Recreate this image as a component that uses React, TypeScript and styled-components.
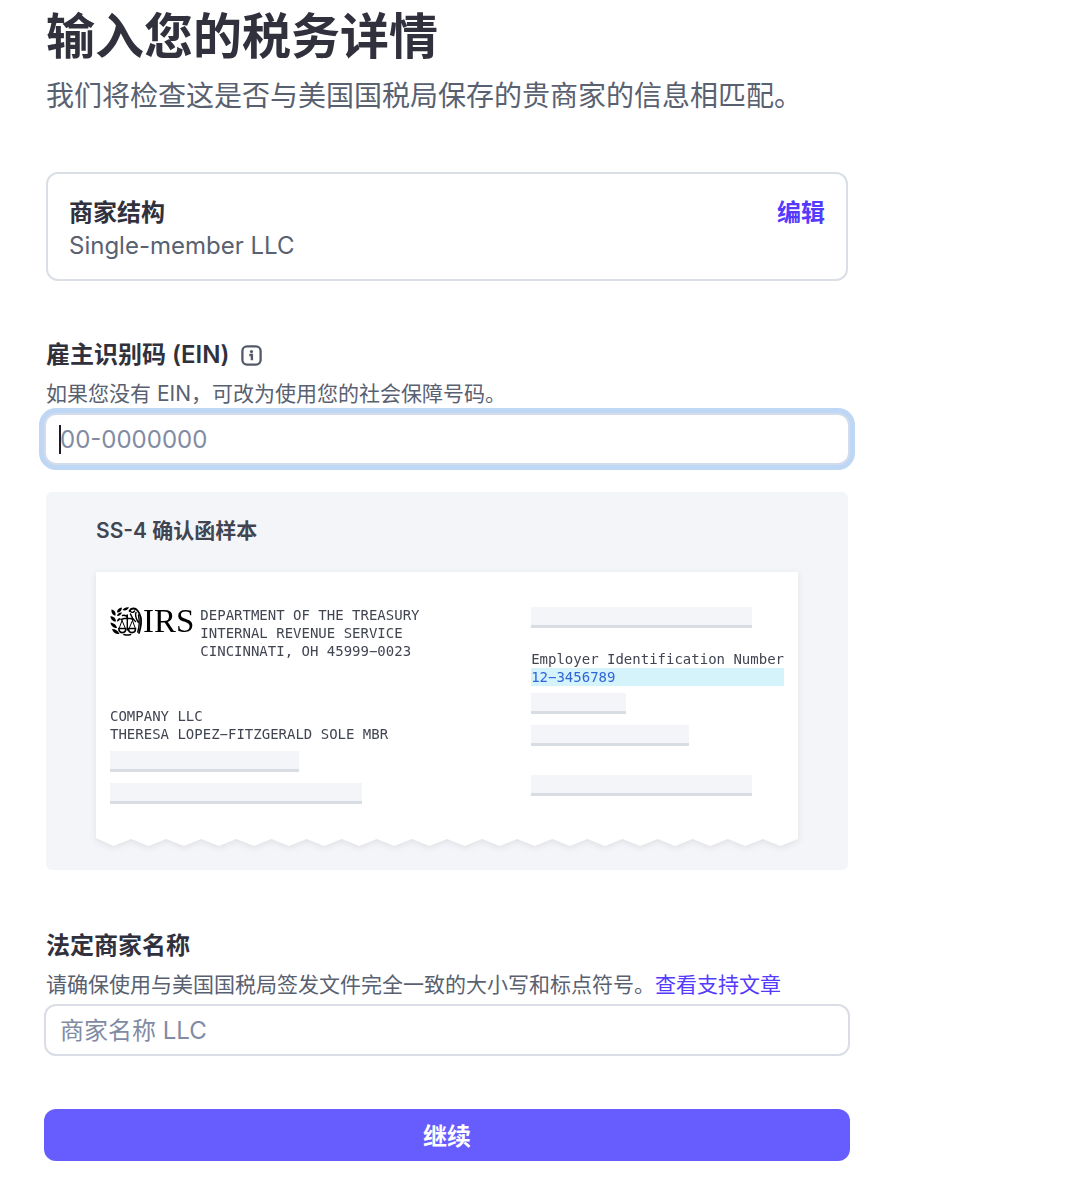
import React from "react";
import styled, { createGlobalStyle } from "styled-components";

const sans = `Inter, "Noto Sans CJK SC", sans-serif`;
const mono = `"DejaVu Sans Mono", monospace`;

const GlobalStyle = createGlobalStyle`
  *, *::before, *::after { box-sizing: border-box; }
  body { margin: 0; background: #ffffff; color: #30313d; font-family: ${sans}; }
  h1, h2, p { margin: 0; }
`;

const Page = styled.main`
  max-width: 894px;
  padding: 5px 44px 38px;
`;

const Form = styled.form`
  display: flex;
  flex-direction: column;
`;

const Header = styled.header`
  display: flex;
  flex-direction: column;
  gap: 7px;
  padding: 0 2px;
`;

const Title = styled.h1`
  font-size: 49px;
  line-height: 64px;
  font-weight: 700;
`;

const Subtitle = styled.p`
  font-size: 28px;
  line-height: 40px;
  color: #596171;
`;

const Card = styled.section`
  display: flex;
  justify-content: space-between;
  align-items: flex-start;
  margin: 56px 2px 0;
  padding: 22px 21px 17px;
  border: 2px solid #dadfe5;
  border-radius: 12px;
  font-size: 24px;
  line-height: 33px;
`;

const CardTitle = styled.h2`
  font-size: 24px;
  line-height: 33px;
  font-weight: 600;
`;

const CardText = styled.p`
  color: #596171;
`;

const EditLink = styled.a`
  color: #533afd;
  font-weight: 600;
  text-decoration: none;
`;

const Field = styled.div<{ $top: number }>`
  display: flex;
  flex-direction: column;
  margin-top: ${(p) => p.$top}px;
`;

const LabelRow = styled.div`
  display: flex;
  align-items: center;
  gap: 12px;
  padding: 0 2px;
`;

const Label = styled.label`
  font-size: 24px;
  line-height: 32px;
  font-weight: 600;
`;

const InfoButton = styled.button`
  display: flex;
  padding: 0;
  border: 0;
  background: none;
  color: #545969;
`;

const Hint = styled.p`
  margin: 9px 2px 5px;
  font-size: 21px;
  line-height: 28px;
  color: #596171;
`;

const HintLink = styled.a`
  color: #533afd;
  text-decoration: none;
`;

const InputWrap = styled.div`
  position: relative;
  display: flex;
`;

const TextInput = styled.input<{ $focused?: boolean }>`
  width: 100%;
  height: 52px;
  padding: 0 14px;
  border: 2px solid ${(p) => (p.$focused ? "#d3dcec" : "#dadde6")};
  border-radius: 12px;
  outline: none;
  background: #ffffff;
  box-shadow: ${(p) => (p.$focused ? "0 0 0 5px #bed7f5" : "none")};
  color: #30313d;
  caret-color: transparent;
  font-family: ${sans};
  font-size: 24px;

  &::placeholder {
    color: #818ba3;
    opacity: 1;
  }
`;

const Caret = styled.span`
  position: absolute;
  top: 12px;
  left: 15px;
  width: 2px;
  height: 29px;
  background: #1a1b25;
`;

const Sample = styled.section`
  margin: 27px 2px 0;
  padding: 22px 50px 24px;
  border-radius: 6px;
  background: #f4f5f8;
`;

const SampleTitle = styled.h2`
  margin-bottom: 24px;
  font-size: 21px;
  line-height: 34px;
  font-weight: 600;
  color: #414552;
`;

const Paper = styled.div`
  filter: drop-shadow(0 2px 3px rgba(48, 49, 61, 0.1));
`;

const Sheet = styled.div`
  display: flex;
  justify-content: space-between;
  padding: 34px 14px;
  background: #ffffff;
  color: #414552;
  font-family: ${mono};
  font-size: 14px;
  line-height: 18px;
`;

const TornEdge = styled.svg`
  display: block;
  width: 100%;
  height: 8px;
`;

const Column = styled.div<{ $top?: number }>`
  display: flex;
  flex-direction: column;
  padding-top: ${(p) => p.$top ?? 0}px;
`;

const Sender = styled.div`
  display: flex;
  gap: 6px;
`;

const Logo = styled.div`
  display: flex;
  height: 30px;
  color: #000000;
  font-family: "Liberation Serif", serif;
  font-size: 33px;
  line-height: 30px;
`;

const Recipient = styled.div`
  margin-top: 47px;
`;

const Bar = styled.div<{ $width: number; $top: number }>`
  width: ${(p) => p.$width}px;
  height: 21px;
  margin-top: ${(p) => p.$top}px;
  border-bottom: 3px solid #d8dce3;
  background: #f4f5f8;
`;

const NumberBlock = styled.div`
  margin-top: 22px;
`;

const Highlight = styled.div`
  background: #d5f3fb;
  color: #2f65d9;
`;

const Submit = styled.button`
  height: 52px;
  margin-top: 53px;
  padding: 0 0 2px;
  border: 0;
  border-radius: 12px;
  background: #675dff;
  color: #ffffff;
  font-family: ${sans};
  font-size: 24px;
  font-weight: 600;
`;

const TEETH = 20;
const tornPoints =
  "0,0 " +
  Array.from({ length: TEETH }, (_, i) => `${i * 35 + 17.5},8 ${(i + 1) * 35},1`).join(" ") +
  " 700,0";

function InfoIcon() {
  return (
    <svg width="21" height="21" viewBox="0 0 21 21" fill="none" aria-hidden="true">
      <rect x="1.4" y="1.4" width="18.2" height="18.2" rx="4.6" stroke="currentColor" strokeWidth="2.3" />
      <circle cx="10.5" cy="6.6" r="1.6" fill="currentColor" />
      <path d="M8.300 10h2.600v5.300" stroke="currentColor" strokeWidth="2.4" />
    </svg>
  );
}

function Eagle() {
  return (
    <svg width="33" height="30" viewBox="0 0 33 30" fill="none" stroke="#000" strokeLinecap="round" aria-hidden="true">
      <g fill="#000" stroke="none">
        <path d="M1.500 3.500c3 .5 4.500 3 4 6C3 9.500 1 7 1.500 3.500Z" />
        <path d="M.5 10c3.500.5 5.500 2.500 5.500 5.500C3 15.500.5 13.500.5 10Z" />
        <path d="M.5 16.500c3.500.5 6 2.500 6.500 5.500C3.500 22 .8 20 .5 16.500Z" />
        <path d="M2 23c3.500.2 6 1.500 7.500 5C6 28.500 3 26.800 2 23Z" />
        <path d="M12 1.500c-.2 3-2 5-5 5C7 3.800 9 1.800 12 1.500Z" />
        <path d="M19 1.500c-1.500 2.500-3.800 3.500-6.500 2.500C14 2 16.500 1 19 1.500Z" />
        <path d="M12 6.500c-1 2.500-2.800 3.800-5 3.500.3-2.200 2.200-3.800 5-3.500Z" />
        <path d="M10.500 12c-.5 2.200-1.800 3.500-3.500 3.500 0-2 1.300-3.500 3.500-3.500Z" />
      </g>
      <path strokeWidth="1.800" d="M19.500 5c1.500-3 5.500-3.500 8-.5 3 4 4 9 3.500 13.500-.3 3.500-1 6-2 9" />
      <path strokeWidth="1.400" d="M20.500 5.500c1.500 1.500 3 1 4-.5M20.500 8c1 3 2.500 5.500 5 7.500M26 6.500c-1.500 3.500.5 6.500 2 9.500M28.500 9c1.200 6 .8 12-.8 17" />
      <path strokeWidth="1.400" d="M12.500 9.500c2.500-.8 4.200.5 5 2.500M11 13.500c4-1.500 9-1.500 12.500 0M17.300 9v15" />
      <path strokeWidth="1" d="M12 14.500l-2.500 7M12 14.500l3 7M22.500 14.500l-3 7M22.500 14.500l2.500 7" />
      <path strokeWidth="1.600" d="M8.800 22.500h7c0 5.500-7 5.500-7 0ZM18.500 22.500h7c0 5.500-7 5.500-7 0ZM14 28.500c2 .7 4.500.7 6.500 0" />
    </svg>
  );
}

export default function App() {
  return (
    <>
      <GlobalStyle />
      <Page>
        <Form onSubmit={(e: React.FormEvent) => e.preventDefault()}>
          <Header>
            <Title>输入您的税务详情</Title>
            <Subtitle>我们将检查这是否与美国国税局保存的贵商家的信息相匹配。</Subtitle>
          </Header>

          <Card>
            <div>
              <CardTitle>商家结构</CardTitle>
              <CardText>Single-member LLC</CardText>
            </div>
            <EditLink href="#structure">编辑</EditLink>
          </Card>

          <Field $top={58}>
            <LabelRow>
              <Label htmlFor="ein">雇主识别码 (EIN)</Label>
              <InfoButton type="button" aria-label="EIN">
                <InfoIcon />
              </InfoButton>
            </LabelRow>
            <Hint>如果您没有 EIN，可改为使用您的社会保障号码。</Hint>
            <InputWrap>
              <TextInput id="ein" type="text" placeholder="00-0000000" $focused />
              <Caret />
            </InputWrap>
          </Field>

          <Sample>
            <SampleTitle>SS-4 确认函样本</SampleTitle>
            <Paper>
              <Sheet>
                <Column>
                  <Sender>
                    <Logo>
                      <Eagle />
                      <span>IRS</span>
                    </Logo>
                    <div>
                      DEPARTMENT OF THE TREASURY
                      <br />
                      INTERNAL REVENUE SERVICE
                      <br />
                      CINCINNATI, OH 45999−0023
                    </div>
                  </Sender>
                  <Recipient>
                    COMPANY LLC
                    <br />
                    THERESA LOPEZ−FITZGERALD SOLE MBR
                  </Recipient>
                  <Bar $width={189} $top={8} />
                  <Bar $width={252} $top={11} />
                </Column>
                <Column $top={1}>
                  <Bar $width={221} $top={0} />
                  <NumberBlock>
                    <div>Employer Identification Number</div>
                    <Highlight>12−3456789</Highlight>
                  </NumberBlock>
                  <Bar $width={95} $top={7} />
                  <Bar $width={158} $top={11} />
                  <Bar $width={221} $top={29} />
                </Column>
              </Sheet>
              <TornEdge viewBox="0 0 700 8" preserveAspectRatio="none" aria-hidden="true">
                <polygon points={tornPoints} fill="#ffffff" />
              </TornEdge>
            </Paper>
          </Sample>

          <Field $top={60}>
            <LabelRow>
              <Label htmlFor="legal-name">法定商家名称</Label>
            </LabelRow>
            <Hint>
              请确保使用与美国国税局签发文件完全一致的大小写和标点符号。
              <HintLink href="#support">查看支持文章</HintLink>
            </Hint>
            <TextInput id="legal-name" type="text" placeholder="商家名称 LLC" />
          </Field>

          <Submit type="submit">继续</Submit>
        </Form>
      </Page>
    </>
  );
}
